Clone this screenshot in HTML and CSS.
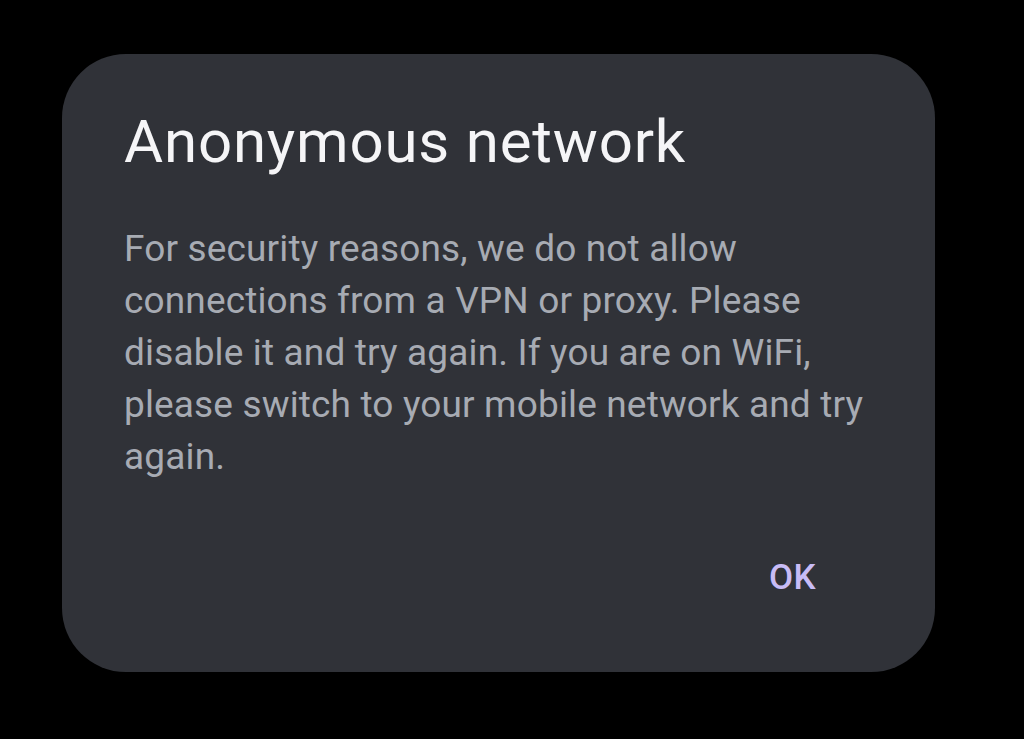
FILE: index.html
```html
<!DOCTYPE html>
<html>
<head>
<meta charset="utf-8">
<link rel="stylesheet" href="styles.css">
</head>
<body>
<div class="dialog">
  <h1 class="title">Anonymous network</h1>
  <p class="message">For security reasons, we do not allow connections from a VPN or proxy. Please disable it and try again. If you are on WiFi, please switch to your mobile network and try again.</p>
  <div class="actions">
    <button class="btn">OK</button>
  </div>
</div>
</body>
</html>
```

FILE: styles.css
```css
html, body {
  margin: 0;
  padding: 0;
  background: #000;
  width: 1024px;
  height: 739px;
  overflow: hidden;
}
body {
  font-family: Roboto, "Liberation Sans", sans-serif;
  padding-top: 54px;
  padding-left: 62px;
  box-sizing: border-box;
}
.dialog {
  width: 873px;
  height: 618px;
  box-sizing: border-box;
  background: #303238;
  border-radius: 64px;
  padding: 58px 62px 0 62px;
  display: flex;
  flex-direction: column;
}
.title {
  margin: 0;
  font-weight: 400;
  font-size: 60px;
  line-height: 60px;
  letter-spacing: 0.8px;
  color: #f5f5f7;
}
.message {
  margin: 51px 0 0 0;
  font-size: 37px;
  line-height: 52px;
  letter-spacing: 0.15px;
  color: #a7abb3;
}
.actions {
  display: flex;
  justify-content: flex-end;
  margin-top: 75px;
  padding-right: 57px;
}
.btn {
  background: none;
  border: none;
  padding: 0;
  font-family: Roboto, "Liberation Sans", sans-serif;
  font-weight: 500;
  font-size: 35px;
  line-height: 40px;
  letter-spacing: 0.01em;
  color: #c8bcf6;
}
```
